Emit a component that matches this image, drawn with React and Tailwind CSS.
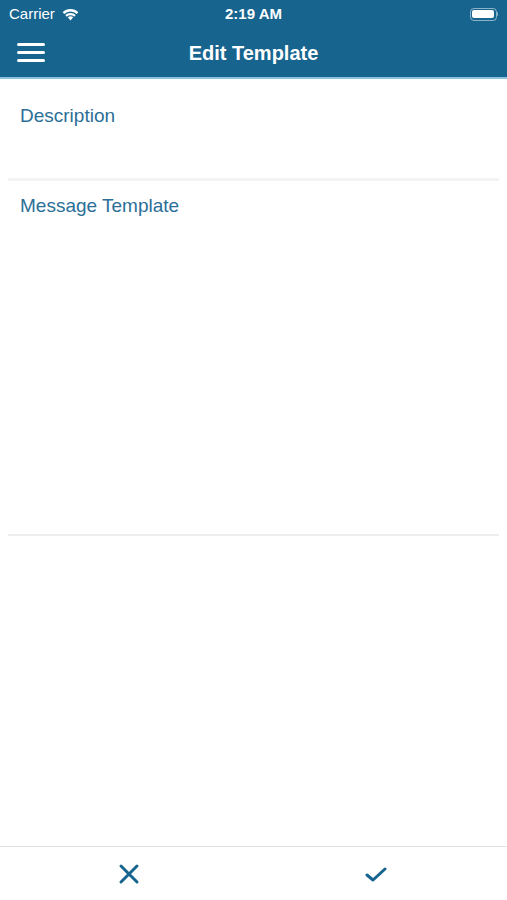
import React from "react";

export default function App() {
    return (
        <div className="w-[507px] h-[900px] bg-white flex flex-col font-['Liberation_Sans',_'Helvetica',_sans-serif]">
            <div className="bg-[#17648f] text-white border-b-2 border-[#8cc3e3]">
                <div className="h-[28px] flex items-center justify-between px-[9px] relative">
                    <div className="flex items-center gap-[6px] text-[15px]">
                        <span>Carrier</span>
                        <svg width="19" height="14" viewBox="0 0 17 13" fill="white">
                            <path d="M8.5 12.5 L11 9.6 A3.8 3.8 0 0 0 6 9.6 Z" />
                            <path d="M3.6 7.4 L5.1 9 A5 5 0 0 1 11.9 9 L13.4 7.4 A7.2 7.2 0 0 0 3.6 7.4 Z" />
                            <path d="M1.2 4.8 L2.7 6.4 A8.4 8.4 0 0 1 14.3 6.4 L15.8 4.8 A10.6 10.6 0 0 0 1.2 4.8 Z" />
                        </svg>
                    </div>
                    <span className="absolute left-1/2 -translate-x-1/2 text-[15px] font-semibold">2:19 AM</span>
                    <div className="flex items-center">
                        <div className="w-[27px] h-[13px] rounded-[4px] border border-white/50 p-[1.5px]">
                            <div className="w-full h-full bg-white rounded-[2px]" />
                        </div>
                        <div className="w-[1.5px] h-[4px] bg-white/50 rounded-r" />
                    </div>
                </div>
                <div className="h-[49px] flex items-center relative">
                    <div className="pl-[17px] flex flex-col gap-[5px]">
                        <div className="w-[28px] h-[3px] bg-white rounded-full" />
                        <div className="w-[28px] h-[3px] bg-white rounded-full" />
                        <div className="w-[28px] h-[3px] bg-white rounded-full" />
                    </div>
                    <span className="absolute left-1/2 -translate-x-1/2 text-[20px] font-semibold">Edit Template</span>
                </div>
            </div>
            <div className="flex-1 flex flex-col">
                <div className="h-[99px] pt-[23px] px-[20px] text-[19px] text-[#2b6f97]">Description</div>
                <div className="mx-[8px] h-[3px] bg-[#f3f3f3]" />
                <div className="h-[353px] pt-[11px] px-[20px] text-[19px] text-[#2b6f97]">Message Template</div>
                <div className="mx-[8px] h-[2px] bg-[#eeeeee]" />
                <div className="flex-1" />
            </div>
            <div className="h-[54px] border-t border-[#e3e3e3] flex items-center">
                <div className="flex-1 flex justify-center pl-[6px]">
                    <svg width="22" height="22" viewBox="0 0 22 22" fill="none" stroke="#17648f" strokeWidth="3" strokeLinecap="round">
                        <path d="M3 3 L19 19 M19 3 L3 19" />
                    </svg>
                </div>
                <div className="flex-1 flex justify-center pr-[8px]">
                    <svg width="22" height="18" viewBox="0 0 22 18" fill="none" stroke="#17648f" strokeWidth="3" strokeLinecap="round" strokeLinejoin="round">
                        <path d="M2 10 L8 15 L20 4" />
                    </svg>
                </div>
            </div>
        </div>
    );
}
